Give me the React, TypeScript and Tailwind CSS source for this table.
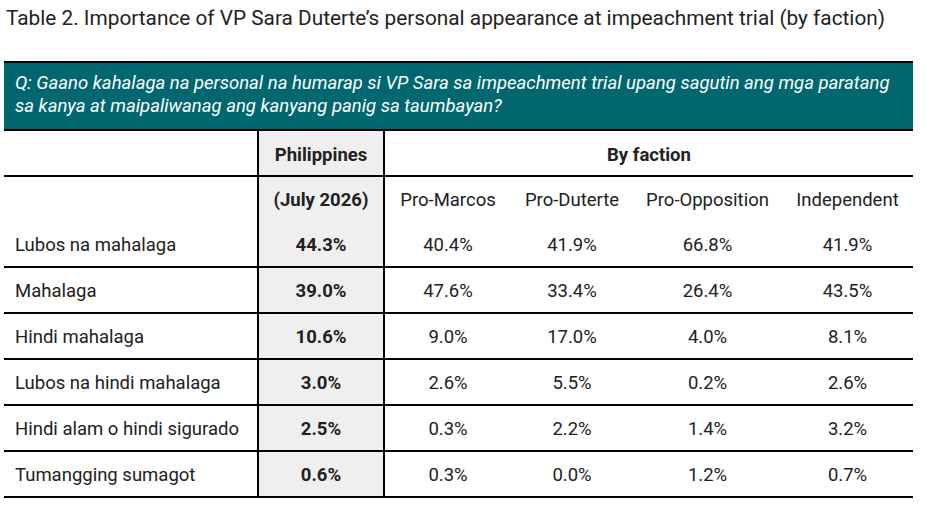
import React from "react";

const rows: [string, string, string, string, string, string][] = [
  ["Lubos na mahalaga", "44.3%", "40.4%", "41.9%", "66.8%", "41.9%"],
  ["Mahalaga", "39.0%", "47.6%", "33.4%", "26.4%", "43.5%"],
  ["Hindi mahalaga", "10.6%", "9.0%", "17.0%", "4.0%", "8.1%"],
  ["Lubos na hindi mahalaga", "3.0%", "2.6%", "5.5%", "0.2%", "2.6%"],
  ["Hindi alam o hindi sigurado", "2.5%", "0.3%", "2.2%", "1.4%", "3.2%"],
  ["Tumangging sumagot", "0.6%", "0.3%", "0.0%", "1.2%", "0.7%"],
];

function FactionCells({ v }: { v: string[] }) {
  return (
    <>
      <div className="w-[126px] flex items-center justify-center pt-[3px]">{v[0]}</div>
      <div className="w-[122px] flex items-center justify-center pt-[3px]">{v[1]}</div>
      <div className="w-[149px] flex items-center justify-center pt-[3px]">{v[2]}</div>
      <div className="w-[131px] flex items-center justify-center pt-[3px]">{v[3]}</div>
    </>
  );
}

export default function App() {
  return (
    <div
      className="w-[926px] h-[511px] bg-white text-[#212121]"
      style={{ fontFamily: "Roboto, 'Liberation Sans', sans-serif" }}
    >
      <div className="pt-[5px] pl-[6px] text-[20.8px] leading-[26px] text-[#222] whitespace-nowrap">
        Table 2. Importance of VP Sara Duterte’s personal appearance at impeachment trial (by faction)
      </div>
      <div className="ml-[4px] mt-[30px] w-[909px] text-[18.5px]">
        <div className="border-y-2 border-black bg-[#00666f] text-white italic pl-[11px] pr-2 pt-[9px] pb-[9px] h-[70px] leading-[23px]">
          Q: Gaano kahalaga na personal na humarap si VP Sara sa impeachment trial upang sagutin ang mga paratang sa kanya at maipaliwanag ang kanyang panig sa taumbayan?
        </div>
        <div className="flex h-[46px] border-b-2 border-black">
          <div className="w-[253px]" />
          <div className="w-[128px] border-x-2 border-black bg-[#efefef] flex items-center justify-center font-bold pt-[5px]">
            Philippines
          </div>
          <div className="w-[528px] flex items-center justify-center font-bold pt-[5px]">By faction</div>
        </div>
        <div className="flex h-[45px]">
          <div className="w-[253px]" />
          <div className="w-[128px] border-x-2 border-black bg-[#efefef] flex items-center justify-center font-bold pt-[3px]">
            (July 2026)
          </div>
          <FactionCells v={["Pro-Marcos", "Pro-Duterte", "Pro-Opposition", "Independent"]} />
        </div>
        {rows.map((r) => (
          <div key={r[0]} className="flex h-[46px] border-b-2 border-black">
            <div className="w-[253px] flex items-center pl-[11px] pt-[3px] whitespace-nowrap">{r[0]}</div>
            <div className="w-[128px] border-x-2 border-black bg-[#efefef] flex items-center justify-center font-bold pt-[3px]">
              {r[1]}
            </div>
            <FactionCells v={r.slice(2)} />
          </div>
        ))}
      </div>
    </div>
  );
}
